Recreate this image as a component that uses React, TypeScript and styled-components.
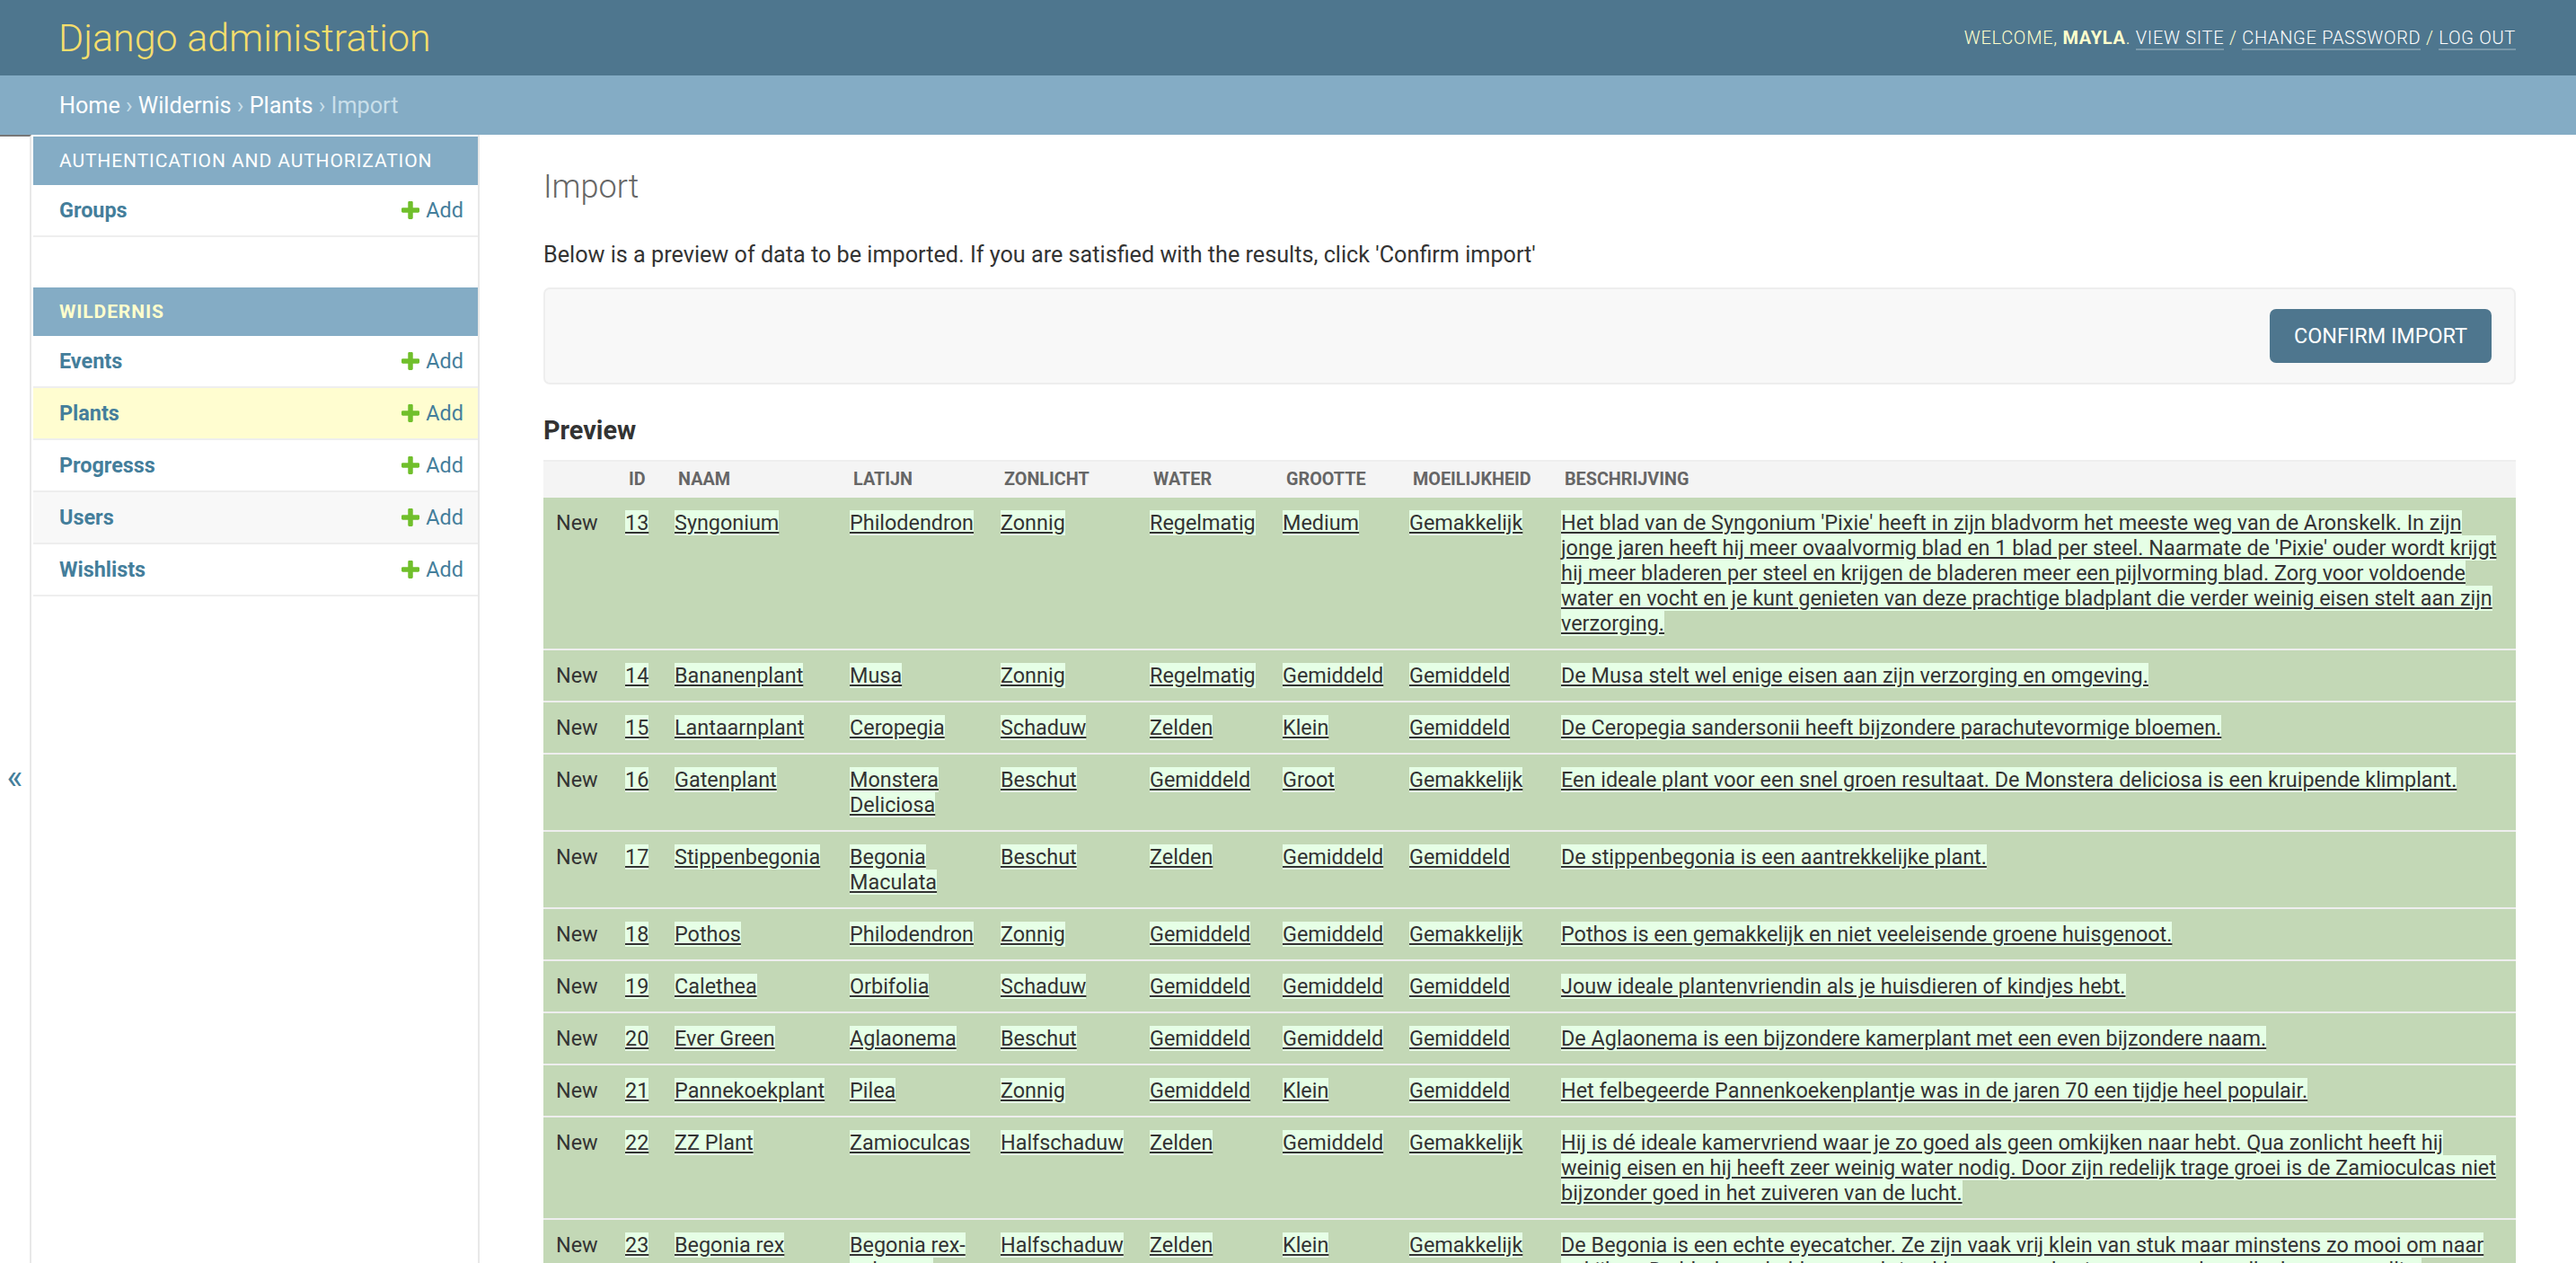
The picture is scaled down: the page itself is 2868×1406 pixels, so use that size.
import React from 'react'
import styled, { createGlobalStyle } from 'styled-components'

const GlobalStyle = createGlobalStyle`
  html, body {
    margin: 0;
    padding: 0;
  }
  body {
    font-family: Roboto, 'Liberation Sans', Arial, sans-serif;
    color: #333;
    background: #fff;
    font-size: 25px;
  }
  * {
    box-sizing: border-box;
  }
`

const Header = styled.header`
  display: flex;
  justify-content: space-between;
  align-items: center;
  height: 84px;
  padding: 0 67px 0 65px;
  background: #4e768e;
`

const Branding = styled.h1`
  margin: 0;
  font-size: 43px;
  font-weight: 300;
  line-height: 50px;
  color: #f5de6c;
`

const UserTools = styled.div`
  font-size: 20px;
  font-weight: 300;
  letter-spacing: 0.72px;
  text-transform: uppercase;
  color: #ffc;

  strong {
    font-weight: 700;
  }
`

const ToolLink = styled.a`
  color: #fff;
  text-decoration: none;
  border-bottom: 2px solid rgba(255, 255, 255, 0.25);
`

const Breadcrumbs = styled.nav`
  display: flex;
  align-items: center;
  height: 66px;
  padding: 0 66px;
  background: #84acc5;
  color: #c9dfea;
  font-size: 25.2px;
  white-space: pre;
`

const Crumb = styled.a`
  color: #fff;
  text-decoration: none;
`

const Main = styled.div`
  display: flex;
  align-items: flex-start;
`

const Toggle = styled.button`
  flex: 0 0 35px;
  display: flex;
  align-items: center;
  justify-content: center;
  width: 35px;
  height: 100vh;
  padding: 22px 0 0 0;
  border: 0;
  border-top: 2px solid #777;
  border-right: 2px solid #e8e8e8;
  background: #fff;
  color: #447e9b;
  font-family: Roboto, sans-serif;
  font-size: 38px;
`

const NavSidebar = styled.nav`
  flex: 0 0 499px;
  align-self: stretch;
  min-height: 100vh;
  padding: 2px 0 0 2px;
  border-right: 2px solid #e8e8e8;
`

const Module = styled.div`
  margin-bottom: 56px;
`

const Caption = styled.div<{ $current?: boolean }>`
  padding: 14px 29px;
  line-height: 26px;
  font-size: 21px;
  letter-spacing: 0.9px;
  text-transform: uppercase;
  background: #84acc5;
  color: ${({ $current }) => ($current ? '#ffc' : '#fff')};
  font-weight: ${({ $current }) => ($current ? 700 : 400)};
`

const ModelRow = styled.div<{ $bg?: string }>`
  display: flex;
  justify-content: space-between;
  align-items: center;
  padding: 14px 16px 14px 29px;
  line-height: 28px;
  font-size: 23.4px;
  border-bottom: 2px solid #eee;
  background: ${({ $bg }) => $bg ?? '#fff'};
`

const ModelLink = styled.a`
  color: #447e9b;
  font-weight: 700;
  text-decoration: none;
`

const AddLink = styled.a`
  display: flex;
  align-items: center;
  gap: 7px;
  color: #447e9b;
  text-decoration: none;
`

const Content = styled.main`
  flex: 1;
  min-width: 0;
  padding: 36px 67px 0 71px;
`

const Title = styled.h1`
  margin: 0 0 36px;
  font-size: 36px;
  font-weight: 300;
  line-height: 44px;
  color: #666;
`

const Lead = styled.p`
  margin: 0 0 18px;
  font-size: 25.2px;
  line-height: 36px;
`

const SubmitRow = styled.div`
  display: flex;
  justify-content: flex-end;
  margin-bottom: 34px;
  padding: 22px 25px;
  background: #f8f8f8;
  border: 2px solid #eee;
  border-radius: 7px;
`

const ConfirmButton = styled.button`
  height: 60px;
  padding: 0 27px;
  border: 0;
  border-radius: 7px;
  background: #4e768e;
  color: #fff;
  font-family: Roboto, sans-serif;
  font-size: 23.4px;
  font-weight: 400;
`

const SectionTitle = styled.h2`
  margin: 0 0 16px;
  font-size: 28.8px;
  font-weight: 700;
  line-height: 34px;
  color: #333;
`

const Table = styled.table`
  width: 100%;
  border-collapse: collapse;
  table-layout: fixed;
  font-size: 23.4px;
`

const Col = styled.col<{ $w: number }>`
  width: ${({ $w }) => $w}px;
`

const Th = styled.th`
  padding: 9px 18px;
  line-height: 22px;
  font-size: 19.8px;
  font-weight: 700;
  text-align: left;
  text-transform: uppercase;
  color: #666;
  background: #f4f4f4;
  border-top: 2px solid #eee;
`

const Row = styled.tr`
  background: #c3d8b6;
`

const Td = styled.td`
  padding: 14px;
  line-height: 28px;
  vertical-align: top;
  color: #333;
  border-bottom: 2px solid #eee;
`

const Ins = styled.ins`
  background: #e6ffe6;
  text-decoration: underline;
`

const PlusIcon = () => (
  <svg width="20" height="20" viewBox="192 192 1408 1408">
    <path
      fill="#70bf2b"
      d="M1600 796v192q0 40-28 68t-68 28h-416v416q0 40-28 68t-68 28h-192q-40 0-68-28t-28-68v-416h-416q-40 0-68-28t-28-68v-192q0-40 28-68t68-28h416v-416q0-40 28-68t68-28h192q40 0 68 28t28 68v416h416q40 0 68 28t28 68z"
    />
  </svg>
)

const columns = [
  { label: '', width: 77 },
  { label: 'Id', width: 55 },
  { label: 'Naam', width: 195 },
  { label: 'Latijn', width: 168 },
  { label: 'Zonlicht', width: 166 },
  { label: 'Water', width: 148 },
  { label: 'Grootte', width: 141 },
  { label: 'Moeilijkheid', width: 169 },
  { label: 'Beschrijving', width: 1077 },
]

const plants = [
  ['13', 'Syngonium', 'Philodendron', 'Zonnig', 'Regelmatig', 'Medium', 'Gemakkelijk',
    "Het blad van de Syngonium 'Pixie' heeft in zijn bladvorm het meeste weg van de Aronskelk. In zijn jonge jaren heeft hij meer ovaalvormig blad en 1 blad per steel. Naarmate de 'Pixie' ouder wordt krijgt hij meer bladeren per steel en krijgen de bladeren meer een pijlvorming blad. Zorg voor voldoende water en vocht en je kunt genieten van deze prachtige bladplant die verder weinig eisen stelt aan zijn verzorging."],
  ['14', 'Bananenplant', 'Musa', 'Zonnig', 'Regelmatig', 'Gemiddeld', 'Gemiddeld',
    'De Musa stelt wel enige eisen aan zijn verzorging en omgeving.'],
  ['15', 'Lantaarnplant', 'Ceropegia', 'Schaduw', 'Zelden', 'Klein', 'Gemiddeld',
    'De Ceropegia sandersonii heeft bijzondere parachutevormige bloemen.'],
  ['16', 'Gatenplant', 'Monstera Deliciosa', 'Beschut', 'Gemiddeld', 'Groot', 'Gemakkelijk',
    'Een ideale plant voor een snel groen resultaat. De Monstera deliciosa is een kruipende klimplant.'],
  ['17', 'Stippenbegonia', 'Begonia Maculata', 'Beschut', 'Zelden', 'Gemiddeld', 'Gemiddeld',
    'De stippenbegonia is een aantrekkelijke plant.'],
  ['18', 'Pothos', 'Philodendron', 'Zonnig', 'Gemiddeld', 'Gemiddeld', 'Gemakkelijk',
    'Pothos is een gemakkelijk en niet veeleisende groene huisgenoot.'],
  ['19', 'Calethea', 'Orbifolia', 'Schaduw', 'Gemiddeld', 'Gemiddeld', 'Gemiddeld',
    'Jouw ideale plantenvriendin als je huisdieren of kindjes hebt.'],
  ['20', 'Ever Green', 'Aglaonema', 'Beschut', 'Gemiddeld', 'Gemiddeld', 'Gemiddeld',
    'De Aglaonema is een bijzondere kamerplant met een even bijzondere naam.'],
  ['21', 'Pannekoekplant', 'Pilea', 'Zonnig', 'Gemiddeld', 'Klein', 'Gemiddeld',
    'Het felbegeerde Pannenkoekenplantje was in de jaren 70 een tijdje heel populair.'],
  ['22', 'ZZ Plant', 'Zamioculcas', 'Halfschaduw', 'Zelden', 'Gemiddeld', 'Gemakkelijk',
    'Hij is dé ideale kamervriend waar je zo goed als geen omkijken naar hebt. Qua zonlicht heeft hij weinig eisen en hij heeft zeer weinig water nodig. Door zijn redelijk trage groei is de Zamioculcas niet bijzonder goed in het zuiveren van de lucht.'],
  ['23', 'Begonia rex', 'Begonia rex-cultorum', 'Halfschaduw', 'Zelden', 'Klein', 'Gemakkelijk',
    'De Begonia is een echte eyecatcher. Ze zijn vaak vrij klein van stuk maar minstens zo mooi om naar te kijken. De bladeren hebben prachtige kleuren en tekeningen en maken elke kamer gezellig.'],
]

const apps = [
  {
    name: 'Authentication and Authorization',
    models: [{ name: 'Groups' }],
  },
  {
    name: 'Wildernis',
    current: true,
    models: [
      { name: 'Events' },
      { name: 'Plants', bg: '#fffdd0' },
      { name: 'Progresss' },
      { name: 'Users', bg: '#f8f8f8' },
      { name: 'Wishlists' },
    ],
  },
]

export default function App() {
  return (
    <>
      <GlobalStyle />
      <Header>
        <Branding>Django administration</Branding>
        <UserTools>
          Welcome, <strong>Mayla</strong>. <ToolLink href="#">View site</ToolLink> /{' '}
          <ToolLink href="#">Change password</ToolLink> / <ToolLink href="#">Log out</ToolLink>
        </UserTools>
      </Header>
      <Breadcrumbs>
        <Crumb href="#">Home</Crumb>
        {' › '}
        <Crumb href="#">Wildernis</Crumb>
        {' › '}
        <Crumb href="#">Plants</Crumb>
        {' › Import'}
      </Breadcrumbs>
      <Main>
        <Toggle aria-label="Toggle navigation">«</Toggle>
        <NavSidebar>
          {apps.map((app) => (
            <Module key={app.name}>
              <Caption $current={app.current}>{app.name}</Caption>
              {app.models.map((m) => (
                <ModelRow key={m.name} $bg={'bg' in m ? m.bg : undefined}>
                  <ModelLink href="#">{m.name}</ModelLink>
                  <AddLink href="#">
                    <PlusIcon />
                    Add
                  </AddLink>
                </ModelRow>
              ))}
            </Module>
          ))}
        </NavSidebar>
        <Content>
          <Title>Import</Title>
          <Lead>
            Below is a preview of data to be imported. If you are satisfied with the results, click
            'Confirm import'
          </Lead>
          <SubmitRow>
            <ConfirmButton>CONFIRM IMPORT</ConfirmButton>
          </SubmitRow>
          <SectionTitle>Preview</SectionTitle>
          <Table>
            <colgroup>
              {columns.map((c, i) => (
                <Col key={i} $w={c.width} />
              ))}
            </colgroup>
            <thead>
              <tr>
                {columns.map((c, i) => (
                  <Th key={i}>{c.label}</Th>
                ))}
              </tr>
            </thead>
            <tbody>
              {plants.map((p) => (
                <Row key={p[0]}>
                  <Td>New</Td>
                  {p.map((v, i) => (
                    <Td key={i}>
                      <Ins>{v}</Ins>
                    </Td>
                  ))}
                </Row>
              ))}
            </tbody>
          </Table>
        </Content>
      </Main>
    </>
  )
}
